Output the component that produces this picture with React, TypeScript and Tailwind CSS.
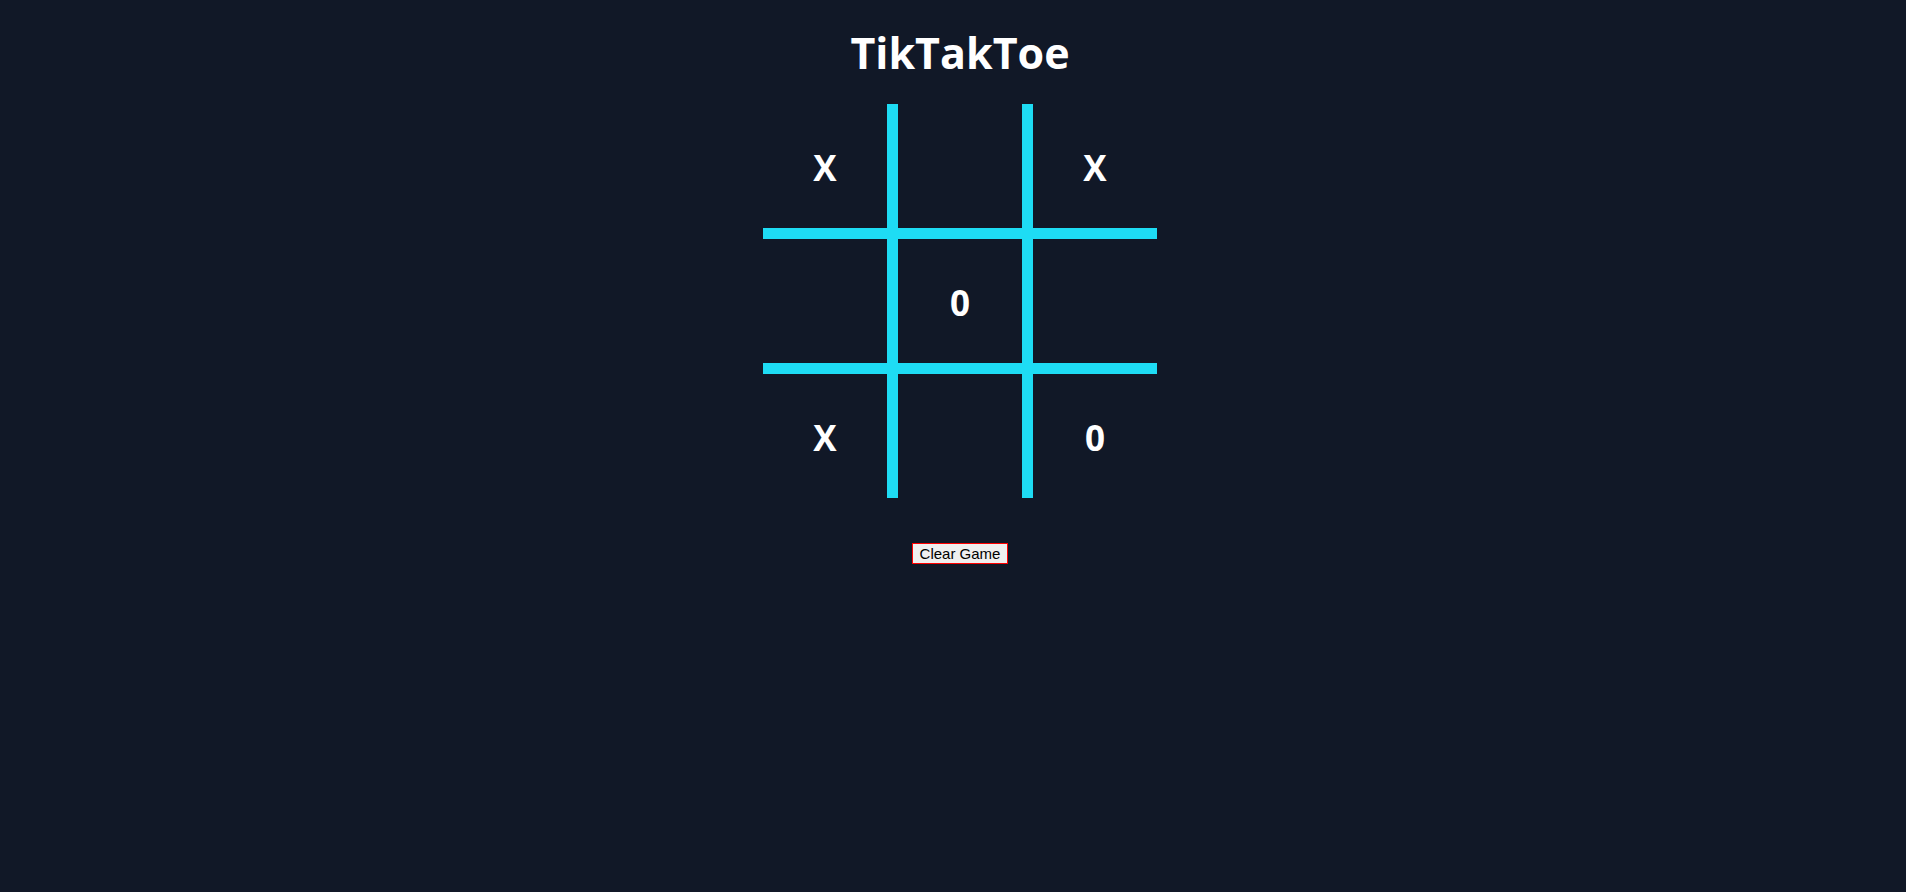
const board = ['X', '', 'X', '', '0', '', 'X', '', '0'];

export default function App() {
  return (
    <div className="min-h-screen bg-[#111827] pl-[14px] flex flex-col items-center font-['Open_Sans',sans-serif]">
      <h1 className="mt-[21px] text-[43px] leading-[64px] font-bold text-white">TikTakToe</h1>

      {/* board */}
      <div className="mt-[19px] grid grid-cols-[135px_135px_124px] grid-rows-[135px_135px_124px]">
        {board.map((cell, i) => (
          <div
            key={i}
            className={`flex items-center justify-center pt-[4px] text-[35px] font-bold text-white border-[#1edcf4] ${
              i % 3 !== 2 ? 'border-r-[11px]' : ''
            } ${i < 6 ? 'border-b-[11px]' : ''}`}
          >
            {cell}
          </div>
        ))}
      </div>

      <button className="mt-[45px] h-[21px] px-[7px] border border-[#ff0000] bg-[#efefef] text-[15px] leading-[17px] text-black font-['Liberation_Sans',sans-serif]">
        Clear Game
      </button>
    </div>
  );
}
